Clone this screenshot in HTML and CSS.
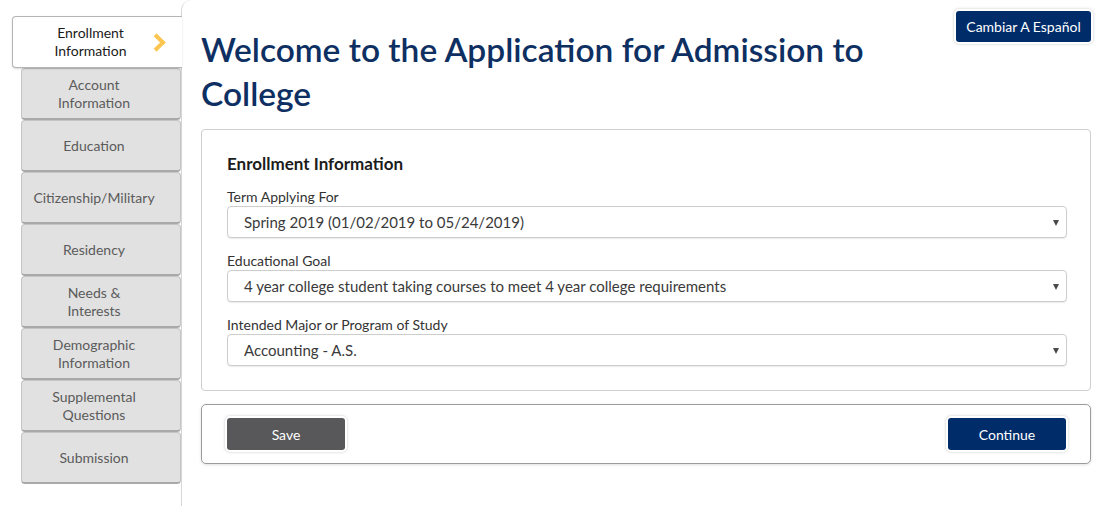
FILE: index.html
```html
<!DOCTYPE html>
<html lang="en">
<head>
    <meta charset="UTF-8">
    <meta name="viewport" content="width=device-width, initial-scale=1.0">
    <title>Application for Admission</title>
    <link rel="stylesheet" href="styles.css">
</head>
<body>

    <div class="page">
        <nav class="steps">
            <a class="step active" href="#">Enrollment<br>Information<span class="chevron"></span></a>
            <a class="step" href="#">Account<br>Information</a>
            <a class="step" href="#">Education</a>
            <a class="step" href="#">Citizenship/Military</a>
            <a class="step" href="#">Residency</a>
            <a class="step" href="#">Needs &amp;<br>Interests</a>
            <a class="step" href="#">Demographic<br>Information</a>
            <a class="step" href="#">Supplemental<br>Questions</a>
            <a class="step" href="#">Submission</a>
        </nav>

        <main class="main">
            <div class="header">
                <h1>Welcome to the Application for Admission to College</h1>
                <button class="btn btn-primary btn-lang">Cambiar A Español</button>
            </div>

            <section class="card">
                <h2>Enrollment Information</h2>

                <label for="term">Term Applying For</label>
                <div class="select-wrap">
                    <select id="term">
                        <option>Spring 2019 (01/02/2019 to 05/24/2019)</option>
                    </select>
                </div>

                <label for="goal">Educational Goal</label>
                <div class="select-wrap">
                    <select id="goal">
                        <option>4 year college student taking courses to meet 4 year college requirements</option>
                    </select>
                </div>

                <label for="major">Intended Major or Program of Study</label>
                <div class="select-wrap">
                    <select id="major">
                        <option>Accounting - A.S.</option>
                    </select>
                </div>
            </section>

            <div class="card actions">
                <button class="btn btn-dark">Save</button>
                <button class="btn btn-primary">Continue</button>
            </div>
        </main>
    </div>

</body>
</html>
```

FILE: styles.css
```css
body {
    font-family: Lato, "Open Sans", sans-serif;
    margin: 0;
    padding: 0;
    background: white;
    color: #222;
}
.page {
    display: flex;
    align-items: flex-start;
}

/* left step list */
.steps {
    width: 181px;
    flex-shrink: 0;
    padding-top: 16px;
    display: flex;
    flex-direction: column;
    align-items: flex-end;
}
.step {
    box-sizing: border-box;
    width: 160px;
    height: 52px;
    display: flex;
    align-items: center;
    justify-content: center;
    padding-right: 14px;
    text-align: center;
    font-size: 14px;
    line-height: 18px;
    color: #5b5b5b;
    text-decoration: none;
    background: #e1e1e1;
    border: 1px solid #c4c4c4;
    border-bottom: 2px solid #a9a9a9;
    border-radius: 4px;
}
.step.active {
    position: relative;
    z-index: 1;
    width: 170px;
    height: 52px;
    margin-right: -1px;
    background: white;
    color: #1a1a1a;
    border: 1px solid #b5b5b5;
    border-right: none;
    border-radius: 4px 0 0 4px;
    box-shadow: 0 1px 2px rgba(0, 0, 0, 0.15);
}
.chevron {
    position: absolute;
    right: 19px;
    top: 19px;
    width: 9px;
    height: 9px;
    border-top: 4px solid #fcc652;
    border-right: 4px solid #fcc652;
    transform: rotate(45deg);
}

/* main column */
.main {
    flex: 1;
    min-height: 464px;
    padding: 11px 21px 31px 19px;
    border-left: 1px solid #d6d6d6;
    border-top-left-radius: 10px;
}
.header {
    display: flex;
    align-items: flex-start;
    gap: 30px;
}
h1 {
    flex: 1;
    margin: 16px 0 0 0;
    font-size: 33.5px;
    line-height: 44px;
    font-weight: 600;
    color: #0e2f62;
}

.btn {
    font-family: Lato, "Open Sans", sans-serif;
    font-size: 14px;
    font-weight: 400;
    color: white;
    border: none;
    border-radius: 3px;
    height: 31px;
    cursor: pointer;
    box-shadow: 0 0 0 2px white, 0 0 3px 2px rgba(0, 0, 0, 0.22);
}
.btn-primary {
    background: #002d69;
}
.btn-primary:hover {
    background: #00214d;
}
.btn-dark {
    background: #58585a;
}
.btn-lang {
    width: 135px;
    flex-shrink: 0;
}

.card {
    margin-top: 13px;
    padding: 23px 23px 24px 25px;
    border: 1px solid #cfcfcf;
    border-radius: 4px;
    background: white;
}
.header + .card {
    margin-top: 14px;
}
.card h2 {
    margin: 0 0 14px 0;
    font-size: 17px;
    font-weight: 700;
    color: #1c1c1c;
}
label {
    display: block;
    font-size: 14px;
    color: #333;
    margin-top: 14px;
    margin-bottom: 1px;
}
.card h2 + label {
    margin-top: 0;
}
.select-wrap {
    position: relative;
}
.select-wrap::after {
    content: "";
    position: absolute;
    right: 8px;
    top: 14px;
    border-left: 3px solid transparent;
    border-right: 3px solid transparent;
    border-top: 6px solid #4a4a4a;
    pointer-events: none;
}
select {
    appearance: none;
    -webkit-appearance: none;
    width: 100%;
    height: 32px;
    padding: 0 24px 0 16px;
    font-family: Lato, "Open Sans", sans-serif;
    font-size: 15px;
    color: #3a3a3a;
    background: white;
    border: 1px solid #cdcdcd;
    border-radius: 4px;
    box-shadow: 0 1px 1px rgba(0, 0, 0, 0.08);
}

.actions {
    padding: 13px 24px 13px 25px;
    display: flex;
    justify-content: space-between;
    border-color: #9c9c9c;
    border-radius: 5px;
    box-shadow: 0 1px 3px rgba(0, 0, 0, 0.12);
}
.actions .btn {
    width: 118px;
    height: 32px;
}
```
